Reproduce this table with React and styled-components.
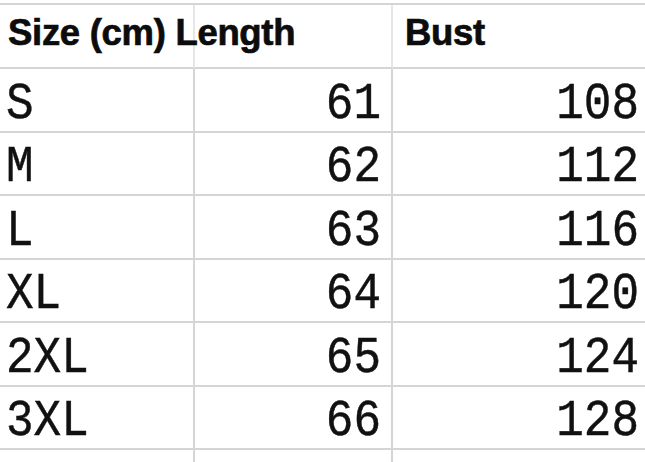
import styled, { createGlobalStyle } from "styled-components";

const GlobalStyle = createGlobalStyle`
  html, body {
    margin: 0;
    padding: 0;
    background: #ffffff;
  }
  body {
    width: 645px;
    height: 462px;
    overflow: hidden;
  }
`;

const sizes = [
  { size: "S", length: 61, bust: 108 },
  { size: "M", length: 62, bust: 112 },
  { size: "L", length: 63, bust: 116 },
  { size: "XL", length: 64, bust: 120 },
  { size: "2XL", length: 65, bust: 124 },
  { size: "3XL", length: 66, bust: 128 },
];

const Sheet = styled.div`
  display: grid;
  grid-template-columns: 195px 198px 1fr;
  grid-template-rows: 64px repeat(6, 63.5px) 12px;
  margin-top: 3px;
  border-top: 2px solid #d5d5d5;
  width: 645px;
  height: 458px;
  overflow: hidden;
`;

const Cell = styled.div`
  box-sizing: border-box;
  display: flex;
  align-items: center;
  justify-content: ${(p) => (p.$right ? "flex-end" : "flex-start")};
  border-bottom: 2px solid #d5d5d5;
  border-right: ${(p) => (p.$last ? "none" : "2px solid #d5d5d5")};
  padding: ${(p) => p.$pad || "8px 0 0 6px"};
  font-family: "Liberation Mono", "Courier New", monospace;
  font-size: 46px;
  color: #111;
  white-space: nowrap;
`;

const Glyphs = styled.span`
  display: inline-block;
  transform: scaleY(1.14);
  -webkit-text-stroke: 0.4px #111;
`;

const HeadCell = styled(Cell)`
  overflow: visible;
  font-family: "Liberation Sans", Arial, sans-serif;
  font-weight: bold;
  font-size: 36.5px;
  letter-spacing: -0.3px;
  -webkit-text-stroke: 0.7px #0c0c0c;
  padding: ${(p) => p.$pad || "0 0 6px 8px"};
  border-right-color: #e6e6e6;
  color: #0c0c0c;
  position: relative;
  z-index: ${(p) => p.$z || 1};
`;

const Filler = styled.div`
  box-sizing: border-box;
  border-right: ${(p) => (p.$last ? "none" : "2px solid #d5d5d5")};
`;

export default function App() {
  return (
    <>
      <GlobalStyle />
      <Sheet>
        <HeadCell $z={2}>Size (cm) Length</HeadCell>
        <HeadCell />
        <HeadCell $last $pad="0 0 6px 12px">
          Bust
        </HeadCell>
        {sizes.map((r) => (
          <>
            <Cell key={r.size + "s"}>
              <Glyphs>{r.size}</Glyphs>
            </Cell>
            <Cell key={r.size + "l"} $right $pad="8px 10px 0 0">
              <Glyphs>{r.length}</Glyphs>
            </Cell>
            <Cell key={r.size + "b"} $right $last $pad="8px 6px 0 0">
              <Glyphs>{r.bust}</Glyphs>
            </Cell>
          </>
        ))}
        <Filler />
        <Filler />
        <Filler $last />
      </Sheet>
    </>
  );
}
